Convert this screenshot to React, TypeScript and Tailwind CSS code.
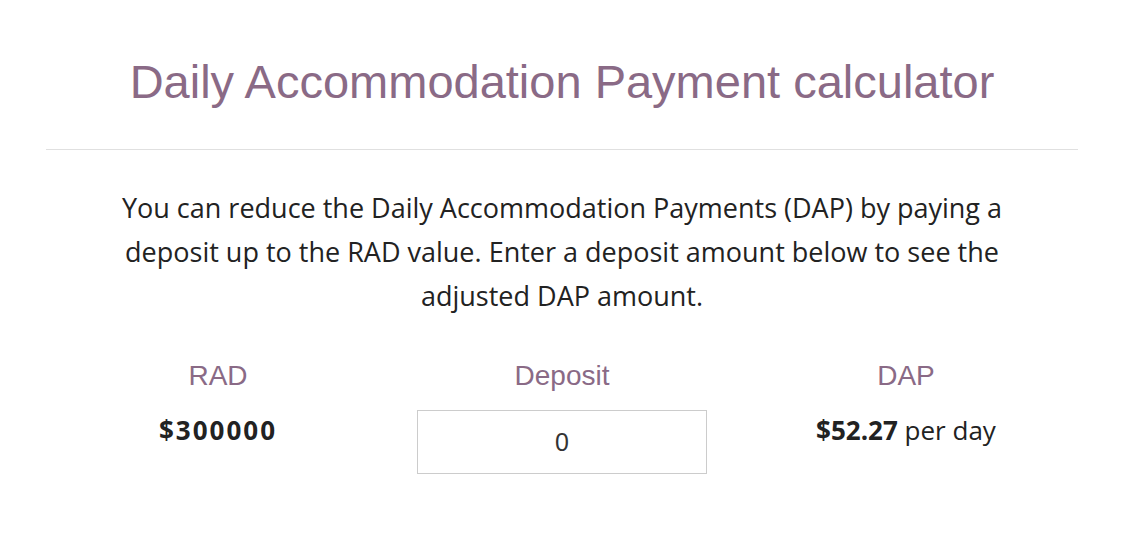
import React from "react";

export default function App() {
  const body = { fontFamily: '"Open Sans", "Noto Sans", sans-serif' };
  const head = { fontFamily: '"Liberation Sans", Arial, sans-serif' };
  return (
    <div className="w-full min-h-[558px] bg-white">
      <div className="ml-[46px] w-[1032px] pt-[56px]">
        <h1 className="text-center text-[47px] leading-[52px] text-[#8a6a86]" style={head}>
          Daily Accommodation Payment calculator
        </h1>
        <div className="mt-[41px] border-t border-[#e0e0e0]" />
        <p className="mx-auto mt-[36px] max-w-[900px] text-center text-[27px] leading-[44px] text-[#222]" style={body}>
          You can reduce the Daily Accommodation Payments (DAP) by paying a deposit up to the RAD value. Enter a deposit amount below to see the adjusted DAP amount.
        </p>
        <div className="mt-[41px] grid grid-cols-3">
          <div className="flex flex-col items-center">
            <div className="text-[28px] leading-[34px] text-[#8a6a86]" style={head}>RAD</div>
            <div className="mt-[17px] h-[64px] text-[26px] font-bold tracking-[2px] leading-[40px] text-[#222]" style={body}>$300000</div>
          </div>
          <div className="flex flex-col items-center">
            <div className="text-[28px] leading-[34px] text-[#8a6a86]" style={head}>Deposit</div>
            <input
              defaultValue="0"
              className="mt-[17px] h-[64px] w-[290px] border border-[#cccccc] text-center text-[25px] text-[#333] outline-none"
              style={head}
            />
          </div>
          <div className="flex flex-col items-center">
            <div className="text-[28px] leading-[34px] text-[#8a6a86]" style={head}>DAP</div>
            <div className="mt-[17px] h-[64px] text-[26px] leading-[40px] text-[#222]" style={body}>
              <span className="font-bold">$52.27</span> per day
            </div>
          </div>
        </div>
      </div>
    </div>
  );
}
